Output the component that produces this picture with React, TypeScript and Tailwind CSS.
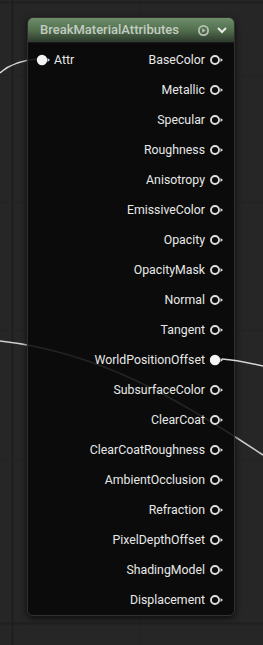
import React from "react";

const outputs = [
  "BaseColor",
  "Metallic",
  "Specular",
  "Roughness",
  "Anisotropy",
  "EmissiveColor",
  "Opacity",
  "OpacityMask",
  "Normal",
  "Tangent",
  "WorldPositionOffset",
  "SubsurfaceColor",
  "ClearCoat",
  "ClearCoatRoughness",
  "AmbientOcclusion",
  "Refraction",
  "PixelDepthOffset",
  "ShadingModel",
  "Displacement",
];

function Pin({ filled }: { filled?: boolean }) {
  return (
    <svg width="14" height="12" viewBox="0 0 14 12" className="shrink-0">
      {filled ? (
        <circle cx="6" cy="6" r="5.2" fill="#f4f4f4" />
      ) : (
        <circle cx="6" cy="6" r="4" fill="none" stroke="#dedede" strokeWidth="1.9" />
      )}
      <path d="M11.5 4 L14 6 L11.5 8 Z" fill="#dedede" />
    </svg>
  );
}

export default function App() {
  return (
    <div
      className="relative w-[263px] h-[645px] overflow-hidden bg-[#262626]"
      style={{ fontFamily: "Roboto, 'Noto Sans', sans-serif" }}
    >
      <svg className="absolute inset-0" width="263" height="645">
        <line x1="12.5" y1="0" x2="12.5" y2="645" stroke="#1e1e1e" strokeWidth="2" />
        <line x1="140.5" y1="0" x2="140.5" y2="645" stroke="#222" strokeWidth="1" />
        <line x1="0" y1="2.5" x2="263" y2="2.5" stroke="#1f1f1f" strokeWidth="2" />
        <line x1="0" y1="623.5" x2="263" y2="623.5" stroke="#1f1f1f" strokeWidth="2" />
        <line x1="0" y1="330.5" x2="263" y2="330.5" stroke="#222" strokeWidth="1" />
        <line x1="0" y1="459.5" x2="263" y2="459.5" stroke="#222" strokeWidth="1" />
        <line x1="0" y1="202.5" x2="263" y2="202.5" stroke="#222" strokeWidth="1" />
        <line x1="0" y1="75.5" x2="263" y2="75.5" stroke="#222" strokeWidth="1" />
        <path d="M0 73 C 10 64, 22 60, 38 59" stroke="#d8d8d8" strokeWidth="1.6" fill="none" />
        <path d="M0 341 C 100 352, 180 400, 263 455" stroke="#d0d0d0" strokeWidth="1.5" fill="none" />
      </svg>

      <div className="absolute left-[27px] top-[17px] w-[208px] h-[599px] rounded-[6px] bg-[rgba(6,7,6,0.86)] border border-[#303030] shadow-[0_2px_6px_rgba(0,0,0,0.7)] overflow-hidden">
        <div className="h-[25px] flex items-center pl-[12px] pr-[6px] bg-gradient-to-b from-[#6e8d69] via-[#52704e] to-[#2e3a2d] border-b border-[#1a1a1a]">
          <span className="text-[13px] font-medium text-[#c3ccc2] flex-1">BreakMaterialAttributes</span>
          <svg width="13" height="13" viewBox="0 0 13 13" className="mr-[6px]">
            <circle cx="6.5" cy="6.5" r="4.6" fill="none" stroke="#b9c0b7" strokeWidth="1.8" />
            <path d="M5.2 4.3 L8.6 6.5 L5.2 8.7 Z" fill="#b9c0b7" />
          </svg>
          <svg width="12" height="12" viewBox="0 0 12 12">
            <path d="M2 4 L6 8 L10 4" fill="none" stroke="#e4e8e3" strokeWidth="2.1" />
          </svg>
        </div>
        <div className="flex flex-col pt-[2px]">
          {outputs.map((name, i) => (
            <div key={name} className="h-[30px] flex items-center">
              {i === 0 ? (
                <div className="flex items-center pl-[8px] gap-[4px]">
                  <Pin filled />
                  <span className="text-[12.3px] text-[#e8e8e8]">Attr</span>
                </div>
              ) : null}
              <div className="flex-1" />
              <div className="flex items-center gap-[4px] pr-[11px]">
                <span className="text-[12.3px] text-[#e8e8e8]">{name}</span>
                <Pin filled={name === "WorldPositionOffset"} />
              </div>
            </div>
          ))}
        </div>
      </div>

      <svg className="absolute inset-0 pointer-events-none" width="263" height="645">
        <path d="M222 359 C 236 360, 250 363, 263 366" stroke="#d8d8d8" strokeWidth="1.5" fill="none" />
      </svg>
    </div>
  );
}
